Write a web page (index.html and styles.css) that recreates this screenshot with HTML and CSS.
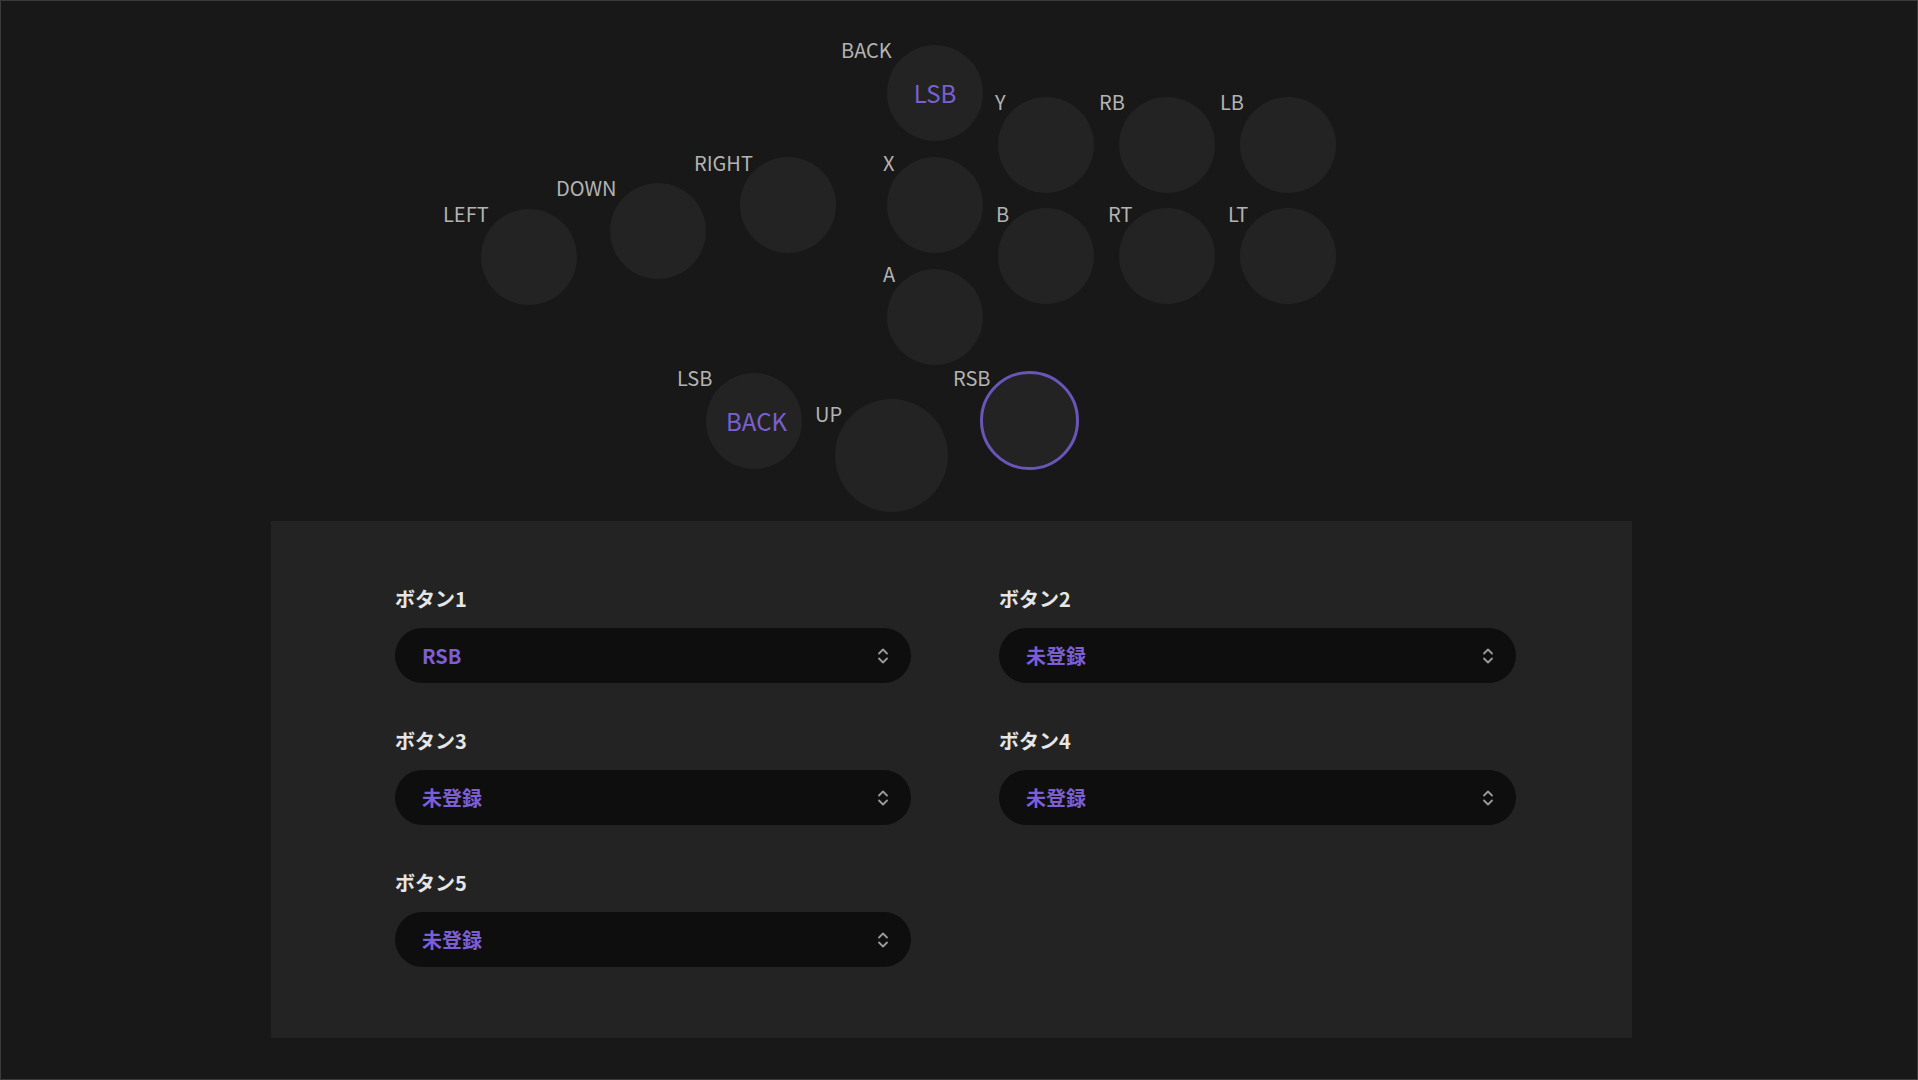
FILE: index.html
```html
<!DOCTYPE html>
<html lang="ja">
<head>
<meta charset="utf-8">
<title>ボタン設定</title>
<link rel="stylesheet" href="styles.css">
</head>
<body>
<div class="page">
  <div class="layout">
    <div class="btn pos-lsb"><span class="btn-text">LSB</span></div>
    <div class="btn pos-x"></div>
    <div class="btn pos-a"></div>
    <div class="btn pos-y"></div>
    <div class="btn pos-rb"></div>
    <div class="btn pos-lb"></div>
    <div class="btn pos-b"></div>
    <div class="btn pos-rt"></div>
    <div class="btn pos-lt"></div>
    <div class="btn pos-right"></div>
    <div class="btn pos-down"></div>
    <div class="btn pos-left"></div>
    <div class="btn pos-back"><span class="btn-text">BACK</span></div>
    <div class="btn btn-big pos-up"></div>
    <div class="btn btn-active pos-rsb"></div>

    <span class="lbl lbl-back">BACK</span>
    <span class="lbl lbl-y">Y</span>
    <span class="lbl lbl-rb">RB</span>
    <span class="lbl lbl-lb">LB</span>
    <span class="lbl lbl-right">RIGHT</span>
    <span class="lbl lbl-x">X</span>
    <span class="lbl lbl-down">DOWN</span>
    <span class="lbl lbl-left">LEFT</span>
    <span class="lbl lbl-b">B</span>
    <span class="lbl lbl-rt">RT</span>
    <span class="lbl lbl-lt">LT</span>
    <span class="lbl lbl-a">A</span>
    <span class="lbl lbl-lsb">LSB</span>
    <span class="lbl lbl-up">UP</span>
    <span class="lbl lbl-rsb">RSB</span>
  </div>

  <section class="panel">
    <div class="grid">
      <div class="field">
        <div class="field-label">ボタン1</div>
        <div class="select"><span class="select-value">RSB</span>
          <svg class="chev" viewBox="0 0 14 18" width="14" height="18"><path d="M3 6.5 L7 2.5 L11 6.5 M3 11.5 L7 15.5 L11 11.5"/></svg></div>
      </div>
      <div class="field">
        <div class="field-label">ボタン2</div>
        <div class="select"><span class="select-value">未登録</span>
          <svg class="chev" viewBox="0 0 14 18" width="14" height="18"><path d="M3 6.5 L7 2.5 L11 6.5 M3 11.5 L7 15.5 L11 11.5"/></svg></div>
      </div>
      <div class="field">
        <div class="field-label">ボタン3</div>
        <div class="select"><span class="select-value">未登録</span>
          <svg class="chev" viewBox="0 0 14 18" width="14" height="18"><path d="M3 6.5 L7 2.5 L11 6.5 M3 11.5 L7 15.5 L11 11.5"/></svg></div>
      </div>
      <div class="field">
        <div class="field-label">ボタン4</div>
        <div class="select"><span class="select-value">未登録</span>
          <svg class="chev" viewBox="0 0 14 18" width="14" height="18"><path d="M3 6.5 L7 2.5 L11 6.5 M3 11.5 L7 15.5 L11 11.5"/></svg></div>
      </div>
      <div class="field">
        <div class="field-label">ボタン5</div>
        <div class="select"><span class="select-value">未登録</span>
          <svg class="chev" viewBox="0 0 14 18" width="14" height="18"><path d="M3 6.5 L7 2.5 L11 6.5 M3 11.5 L7 15.5 L11 11.5"/></svg></div>
      </div>
    </div>
  </section>
</div>
</body>
</html>
```

FILE: styles.css
```css
* { box-sizing: border-box; }
html, body { margin: 0; padding: 0; }
body {
  background: #181818;
  font-family: "Noto Sans CJK JP", "Noto Sans", sans-serif;
  color: #b3b3b3;
}
.page {
  width: 1918px;
  height: 1080px;
  border: 1px solid #3b3b3b;
  background: #181818;
  overflow: hidden;
}
.layout {
  position: relative;
  height: 520px;
}
.btn {
  position: absolute;
  width: 96px;
  height: 96px;
  border-radius: 50%;
  background: #232323;
  display: flex;
  align-items: center;
  justify-content: center;
}
.btn-big { width: 113px; height: 113px; }
.btn-active { width: 99px; height: 99px; border: 3px solid #6a56b8; }
.btn-text {
  color: #7a60cf;
  font-size: 24px;
  line-height: 24px;
}
.pos-lsb { left: 886px; top: 44px; }
.pos-x { left: 886px; top: 156px; }
.pos-a { left: 886px; top: 268px; }
.pos-y { left: 997px; top: 96px; }
.pos-rb { left: 1118px; top: 96px; }
.pos-lb { left: 1239px; top: 96px; }
.pos-b { left: 997px; top: 207px; }
.pos-rt { left: 1118px; top: 207px; }
.pos-lt { left: 1239px; top: 207px; }
.pos-right { left: 739px; top: 156px; }
.pos-down { left: 609px; top: 182px; }
.pos-left { left: 480px; top: 208px; }
.pos-back { left: 705px; top: 372px; padding-left: 5px; }
.pos-up { left: 834px; top: 398px; }
.pos-rsb { left: 979px; top: 370px; }

.lbl {
  position: absolute;
  font-size: 20px;
  line-height: 20px;
  color: #b3b3b3;
  white-space: nowrap;
}
.lbl-back { left: 840px; top: 39px; }
.lbl-y { left: 994px; top: 91px; }
.lbl-rb { left: 1098px; top: 91px; }
.lbl-lb { left: 1219px; top: 91px; }
.lbl-right { left: 693px; top: 152px; }
.lbl-x { left: 882px; top: 152px; }
.lbl-down { left: 555px; top: 177px; }
.lbl-left { left: 442px; top: 203px; }
.lbl-b { left: 995px; top: 203px; }
.lbl-rt { left: 1107px; top: 203px; }
.lbl-lt { left: 1227px; top: 203px; }
.lbl-a { left: 882px; top: 263px; }
.lbl-lsb { left: 676px; top: 367px; }
.lbl-up { left: 814px; top: 403px; }
.lbl-rsb { left: 952px; top: 367px; }

.panel {
  margin-left: 270px;
  width: 1361px;
  background: #232323;
  padding: 66px 0 71px 124px;
}
.grid {
  display: grid;
  grid-template-columns: 516px 517px;
  column-gap: 88px;
  row-gap: 46px;
}
.field {
  display: flex;
  flex-direction: column;
  gap: 17px;
}
.field-label {
  font-size: 20px;
  line-height: 24px;
  font-weight: 700;
  color: #e6e6e6;
}
.select {
  height: 55px;
  border-radius: 28px;
  background: #0e0e0e;
  display: flex;
  align-items: center;
  justify-content: space-between;
  padding: 0 21px 0 27px;
}
.select-value {
  font-size: 20px;
  line-height: 24px;
  font-weight: 700;
  color: #7c5fd4;
}
.chev { display: block; }
.chev path {
  fill: none;
  stroke: #9a9a9a;
  stroke-width: 1.8;
  stroke-linecap: round;
  stroke-linejoin: round;
}
```
